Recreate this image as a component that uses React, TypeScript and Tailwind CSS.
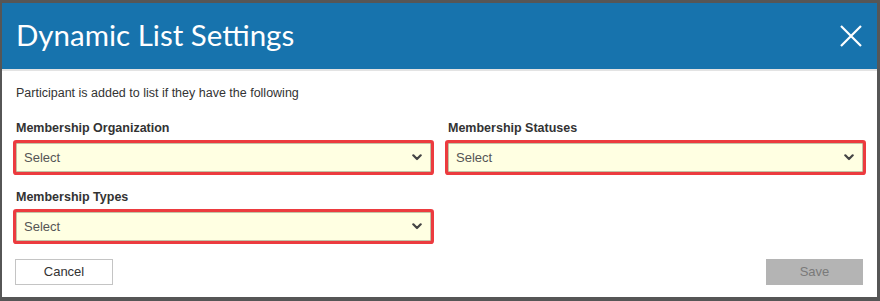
import React from 'react'

const fields = [
  { label: 'Membership Organization' },
  { label: 'Membership Statuses' },
  { label: 'Membership Types' },
]

function Chevron() {
  return (
    <svg width="10" height="7" viewBox="0 0 10 7" className="shrink-0">
      <path d="M1.3 1.3 L5 5 L8.7 1.3" fill="none" stroke="#444" strokeWidth="2.2" strokeLinecap="round" strokeLinejoin="round" />
    </svg>
  )
}

function SelectField({ label }: { label: string }) {
  return (
    <div className="flex flex-col">
      <label className="text-[12.5px] leading-[16px] font-bold text-[#333]">{label}</label>
      {/* focused / invalid select with red ring */}
      <div className="mt-[7px] h-[29px] flex items-center justify-between pl-[7px] pr-[8px] bg-[#ffffe2] border border-[#c3c3a6] rounded-[1px] shadow-[0_0_0_3px_#ec3b3f]">
        <span className="text-[13px] text-[#555]">Select</span>
        <Chevron />
      </div>
    </div>
  )
}

export default function App() {
  return (
    <div className="w-[880px] h-[301px] bg-[#565656] pl-[2px] pt-[3px] pr-[3px] pb-[4px] font-['Liberation_Sans',Arial,sans-serif]">
      <div className="bg-white h-full flex flex-col">
        <div className="h-[68px] shrink-0 bg-[#1773ad] border-b-2 border-[#e3e3e3] flex items-center justify-between pl-[14px] pr-[15px]">
          <h1 className="text-white text-[29.5px] leading-none font-['Lato','Open_Sans',sans-serif] font-normal pb-[2px]">
            Dynamic List Settings
          </h1>
          <svg width="22" height="22" viewBox="0 0 22 22">
            <path d="M1 1 L21 21 M21 1 L1 21" stroke="white" strokeWidth="2.2" fill="none" />
          </svg>
        </div>

        <div className="px-[14px] flex flex-col flex-1">
          <p className="mt-[14px] text-[12.5px] leading-[16px] text-[#333]">
            Participant is added to list if they have the following
          </p>

          <div className="mt-[19px] grid grid-cols-2 gap-x-[17px] gap-y-[17px]">
            <SelectField label={fields[0].label} />
            <SelectField label={fields[1].label} />
            <SelectField label={fields[2].label} />
          </div>

          <div className="mt-[18px] flex justify-between">
            <button className="ml-[-1px] w-[98px] h-[26px] border border-[#c4c4c4] bg-white text-[13px] text-[#333]">
              Cancel
            </button>
            <button className="w-[97px] h-[26px] bg-[#b4b4b4] text-[13px] text-[#7a7a7a]" disabled>
              Save
            </button>
          </div>
        </div>
      </div>
    </div>
  )
}
